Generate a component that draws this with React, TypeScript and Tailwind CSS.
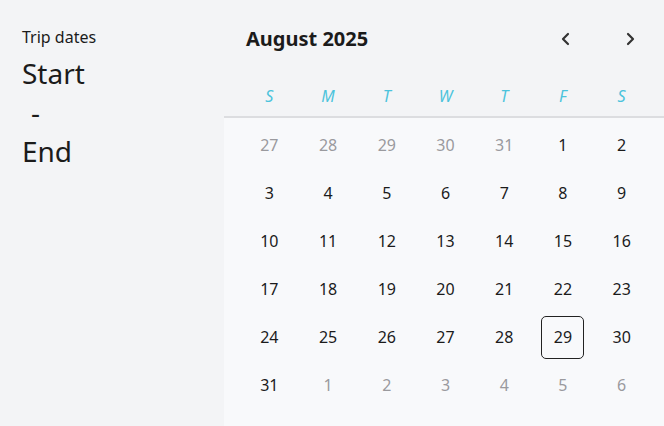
import React from "react";

const weeks: { d: number; muted: boolean }[][] = [
  [27, 28, 29, 30, 31].map((d) => ({ d, muted: true })).concat([1, 2].map((d) => ({ d, muted: false }))),
  [3, 4, 5, 6, 7, 8, 9].map((d) => ({ d, muted: false })),
  [10, 11, 12, 13, 14, 15, 16].map((d) => ({ d, muted: false })),
  [17, 18, 19, 20, 21, 22, 23].map((d) => ({ d, muted: false })),
  [24, 25, 26, 27, 28, 29, 30].map((d) => ({ d, muted: false })),
  [{ d: 31, muted: false }].concat([1, 2, 3, 4, 5, 6].map((d) => ({ d, muted: true }))),
];

const days = ["S", "M", "T", "W", "T", "F", "S"];

export default function App() {
  return (
    <div
      className="flex w-[664px] h-[426px] bg-[#f3f4f6] text-[#1b1b1b] overflow-hidden"
      style={{ fontFamily: '"Noto Sans", "Open Sans", sans-serif' }}
    >
      <div className="w-[224px] shrink-0 pl-[22px] pt-[25px]">
        <div className="text-[16px] leading-[24px]">Trip dates</div>
        <div className="text-[28px] leading-[39px] mt-[5px]">
          <div>Start</div>
          <div className="pl-[9px]">-</div>
          <div>End</div>
        </div>
      </div>
      <div className="flex-1 flex flex-col">
        <div className="h-[118px] flex flex-col border-b-2 border-[#dcdde0]">
          <div className="flex items-center h-[78px] pl-[22px] pr-[28px]">
            <div className="text-[20px] font-bold flex-1">August 2025</div>
            <svg width="12" height="16" viewBox="0 0 12 16" className="mr-[52px]">
              <path d="M8 3 L3 8 L8 13" fill="none" stroke="#333" strokeWidth="2.2" strokeLinecap="round" strokeLinejoin="round" />
            </svg>
            <svg width="12" height="16" viewBox="0 0 12 16">
              <path d="M4 3 L9 8 L4 13" fill="none" stroke="#333" strokeWidth="2.2" strokeLinecap="round" strokeLinejoin="round" />
            </svg>
          </div>
          <div className="grid grid-cols-7 pl-[16px] pr-[13px] mt-[6px]">
            {days.map((d, i) => (
              <div key={i} className="text-center italic text-[16px] text-[#4bc3dc]">
                {d}
              </div>
            ))}
          </div>
        </div>
        <div className="flex-1 bg-[#f8f9fb] pl-[16px] pr-[13px] pt-[3px]">
          {weeks.map((w, wi) => (
            <div key={wi} className="grid grid-cols-7 h-[48px]">
              {w.map((c, ci) => (
                <div key={ci} className="flex items-center justify-center">
                  <div
                    className={
                      "w-[43px] h-[43px] flex items-center justify-center text-[16px] rounded-[5px] " +
                      (c.muted ? "text-[#9a9a9e] " : "text-[#1b1b1b] ") +
                      (wi === 4 && c.d === 29 ? "border border-[#222]" : "")
                    }
                  >
                    {c.d}
                  </div>
                </div>
              ))}
            </div>
          ))}
        </div>
      </div>
    </div>
  );
}
